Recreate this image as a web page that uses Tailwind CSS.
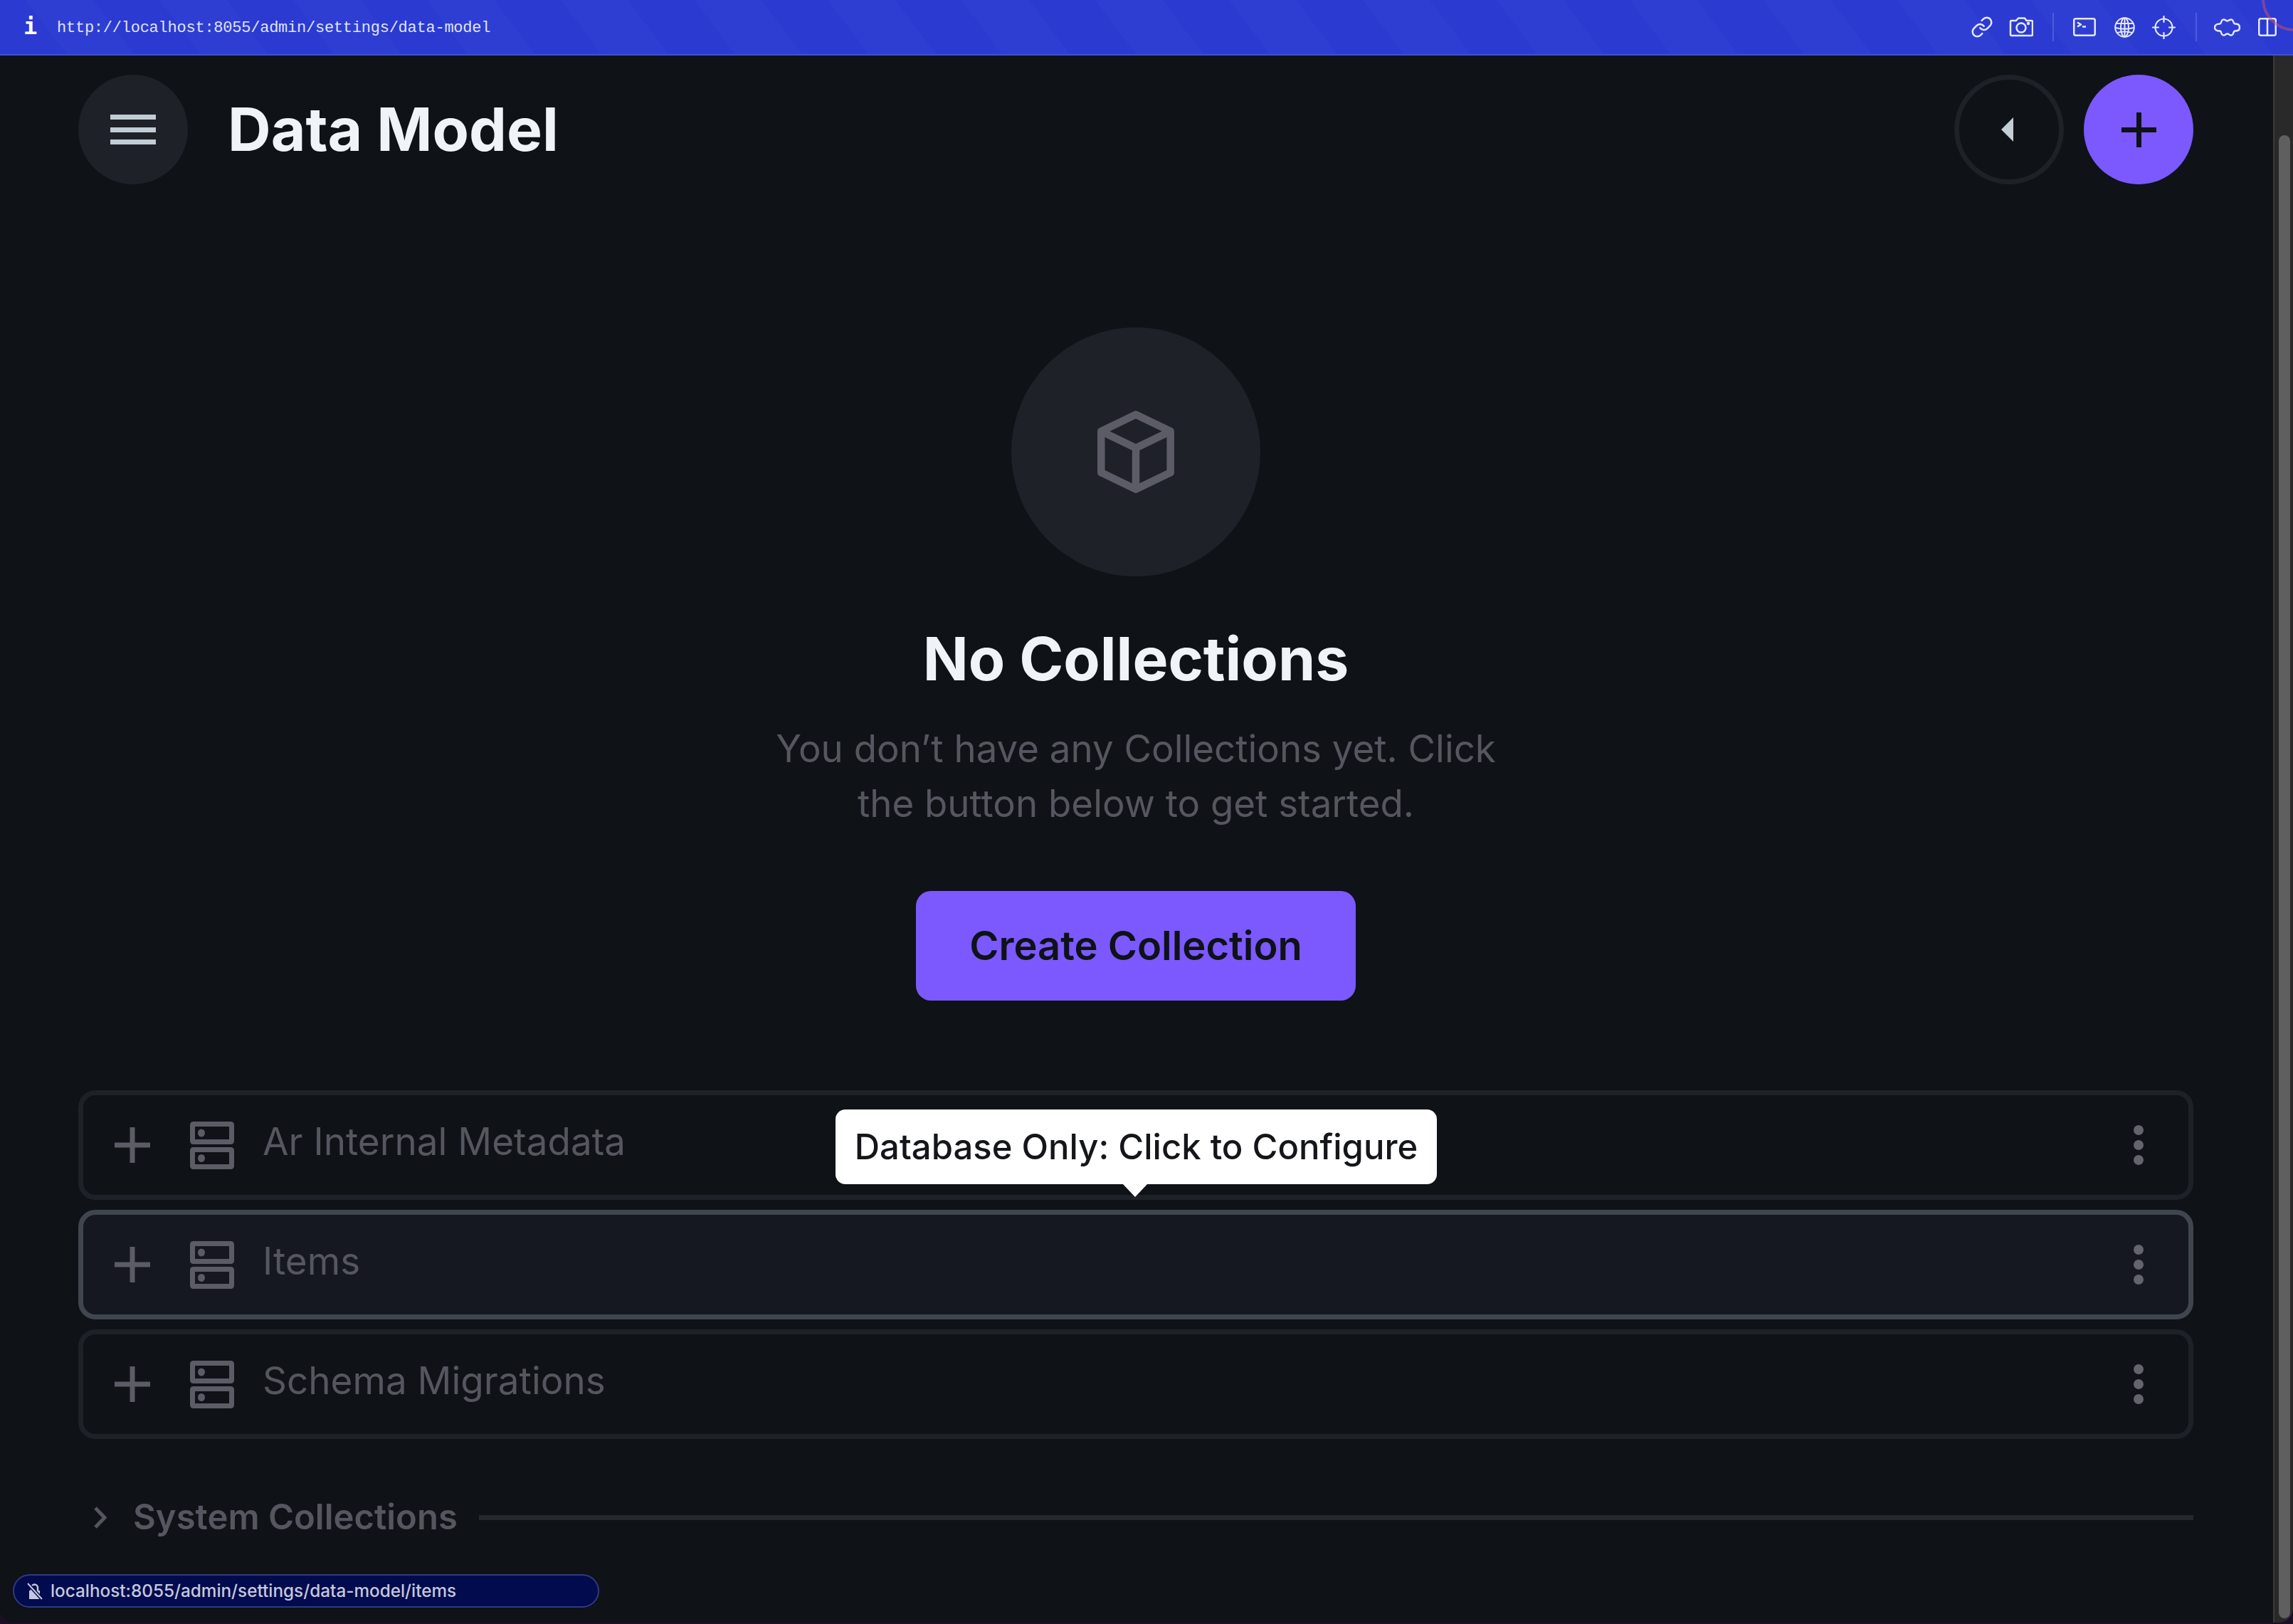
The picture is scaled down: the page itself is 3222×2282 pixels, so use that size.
<!DOCTYPE html>
<html lang="en">
<head>
    <meta charset="UTF-8">
    <meta name="viewport" content="width=device-width, initial-scale=1.0">
    <title>Data Model</title>
    <script src="https://cdn.jsdelivr.net/npm/@tailwindcss/browser@4"></script>
</head>
<body class="bg-[#1a0f24] font-['Inter',sans-serif]">
    <div class="relative w-[3222px] h-[2282px] overflow-hidden">
        <div class="flex flex-col h-[2280px] bg-[#0f1216] rounded-b-[20px] overflow-hidden">

            <!-- Browser toolbar -->
            <header class="h-[78px] shrink-0 flex items-center border-b-2 border-[#4152d8] text-[#e4e8ff] bg-[repeating-linear-gradient(53deg,#2b3ad0_0px,#2b3ad0_75px,#2f3ed2_75px,#2f3ed2_150px)]">
                <span class="w-[80px] pl-[33px] pb-[2px] text-[32px] leading-none font-bold font-['DejaVu_Sans_Mono',monospace] text-white">i</span>
                <span class="flex-1 pt-[2px] font-['Liberation_Mono',monospace] text-[22px] tracking-[-0.24px] text-[#dfe3ff]">http://localhost:8055/admin/settings/data-model</span>
                <div class="flex items-center">
                    <svg class="w-[32px] h-[32px]" viewBox="0 0 24 24" fill="none" stroke="currentColor" stroke-width="1.9" stroke-linecap="round" stroke-linejoin="round"><path d="M10 13a5 5 0 0 0 7.54.54l3-3a5 5 0 0 0-7.07-7.07l-1.72 1.71"/><path d="M14 11a5 5 0 0 0-7.54-.54l-3 3a5 5 0 0 0 7.07 7.07l1.71-1.71"/></svg>
                    <svg class="w-[34px] h-[28px] ml-[22px]" viewBox="0 0 34 28" fill="none" stroke="currentColor" stroke-width="2.5" stroke-linejoin="round"><path d="M3 5h7l3-3.5h9l2.500 3.500h7a1.500 1.500 0 0 1 1.500 1.500v18a1.500 1.500 0 0 1-1.500 1.500h-28a1.500 1.500 0 0 1-1.500-1.500v-18a1.500 1.500 0 0 1 1.500-1.500z"/><circle cx="17" cy="15" r="6.500"/><circle cx="27" cy="9" r="1" fill="currentColor"/></svg>
                    <span class="w-[2px] h-[40px] ml-[27px] bg-[#4c5cdc]"></span>
                    <svg class="w-[32px] h-[26px] ml-[27px]" viewBox="0 0 32 26" fill="none" stroke="currentColor" stroke-width="2.500" stroke-linejoin="round"><rect x="1.250" y="1.250" width="29.500" height="23.500" rx="2.500"/><path d="M6 6.500l5 3-5 3M13 12.500h5"/></svg>
                    <svg class="w-[29px] h-[29px] ml-[26px]" viewBox="0 0 29 29" fill="none" stroke="currentColor" stroke-width="2"><circle cx="14.500" cy="14.500" r="13.300"/><ellipse cx="14.500" cy="14.500" rx="5.500" ry="13.300"/><path d="M2.500 9h24M1.500 15c8 2 18 2 26 0M4 22c6-2 15-2 21 0M14.500 1v27"/></svg>
                    <svg class="w-[33px] h-[33px] ml-[24px]" viewBox="0 0 33 33" fill="none" stroke="currentColor" stroke-width="2.200" stroke-linecap="round"><circle cx="16.500" cy="16.500" r="12"/><path d="M16.500 1v8M16.500 24v8M1 16.500h8M24 16.500h8"/></svg>
                    <span class="w-[2px] h-[40px] ml-[28px] bg-[#4c5cdc]"></span>
                    <svg class="w-[37px] h-[25px] ml-[24px] mr-[1px]" viewBox="0 0 37 25" fill="none" stroke="currentColor" stroke-width="2.400" stroke-linejoin="round"><path d="M8 7.500C9.500 7.500 10 6 10.500 4C11 1.500 14 .8 16 2.300C17.500 3.500 20 3.500 21.500 2.300C24 .8 26.500 1.500 27 4C27.500 6 28 7.500 30 7.500C34 7.500 36 9.500 36 12.500C36 15.500 34 17.500 30 17.500C28 17.500 27.500 19 27 21C26.500 23.500 24 24.200 21.500 22.700C20 21.500 17.500 21.500 16 22.700C14 24.200 11 23.500 10.500 21C10 19 9.500 17.500 8 17.500C3.500 17.500 1 15.500 1 12.500C1 9.500 3.500 7.500 8 7.500Z"/></svg>
                    <svg class="w-[26px] h-[26px] ml-[24px] mr-[23px]" viewBox="0 0 26 26" fill="none" stroke="currentColor" stroke-width="2.500"><rect x="1.250" y="1.250" width="23.500" height="23.500" rx="2.500"/><path d="M13 1v24"/></svg>
                </div>
            </header>

            <div class="flex-1 flex min-h-0">
                <main class="flex-1 pl-[110px] pr-[112px] pt-[27px]">
                    <div class="flex items-center h-[154px]">
                        <button class="w-[154px] h-[154px] rounded-full bg-[#1e2128] flex items-center justify-center">
                            <span class="flex flex-col gap-[10.500px]">
                                <span class="block w-[64px] h-[7px] bg-[#c2ccd4]"></span>
                                <span class="block w-[64px] h-[7px] bg-[#c2ccd4]"></span>
                                <span class="block w-[64px] h-[7px] bg-[#c2ccd4]"></span>
                            </span>
                        </button>
                        <h1 class="flex-1 ml-[56px] text-[84px] leading-none font-bold text-[#f0f4f9]">Data Model</h1>
                        <button class="w-[154px] h-[154px] rounded-full border-[7px] border-[#1e2128] flex items-center justify-center">
                            <svg class="w-[17px] h-[34px] mr-[5px]" viewBox="0 0 17 34"><path d="M17 0V34L0 17z" fill="#c4ced6"/></svg>
                        </button>
                        <button class="w-[154px] h-[154px] ml-[28px] rounded-full bg-[#7b59ff] flex items-center justify-center">
                            <svg class="w-[49px] h-[49px]" viewBox="0 0 49 49"><path d="M21 0h7v21h21v7H28v21h-7V28H0v-7h21z" fill="#0f1216"/></svg>
                        </button>
                    </div>

                    <!-- Empty state -->
                    <section class="flex flex-col items-center pt-[201px]">
                        <div class="w-[350px] h-[350px] rounded-full bg-[#1e2128] flex items-center justify-center">
                            <svg class="w-[108px] h-[116px]" viewBox="0 0 108 116" fill="none" stroke="#5b5c66" stroke-width="10.500" stroke-linejoin="round"><path d="M54 5.500L102.700 29v58L54 110.500 5.300 87V29z"/><path d="M5.300 29L54 52.500 102.700 29M54 52.500v58"/></svg>
                        </div>
                        <h2 class="mt-[66px] text-[84px] leading-[100px] font-bold text-[#f0f4f9]">No Collections</h2>
                        <p class="mt-[38px] w-[1120px] text-center text-[52.800px] leading-[77px] text-[#55565f]">You don’t have any Collections yet. Click<br>the button below to get started.</p>
                        <button class="mt-[84px] w-[618px] h-[154px] rounded-[21px] bg-[#7b59ff] text-[56px] font-semibold text-[#0f1216]">Create Collection</button>
                    </section>

                    <!-- Collections -->
                    <section class="mt-[126px] flex flex-col gap-[14px]">
                        <div class="h-[154px] rounded-[24px] border-[7px] border-[#1e2128] flex items-center pl-[44px] pr-[63px]">
                            <svg class="w-[50px] h-[50px] shrink-0" viewBox="0 0 50 50"><path d="M21.500 0h7v21.500H50v7H28.500V50h-7V28.500H0v-7h21.500z" fill="#5b5c66"/></svg>
                            <svg class="w-[62px] h-[67px] ml-[56px] shrink-0" viewBox="0 0 62 67" fill="none" stroke="#5b5c66" stroke-width="7"><rect x="3.500" y="3.500" width="55" height="25" rx="1"/><rect x="3.500" y="39.500" width="55" height="24" rx="1"/><ellipse cx="16" cy="16" rx="5" ry="5.500" fill="#5b5c66" stroke="none"/><ellipse cx="16" cy="51.500" rx="5" ry="5.500" fill="#5b5c66" stroke="none"/></svg>
                            <span class="flex-1 ml-[40px] pb-[8px] text-[53px] text-[#55565f]">Ar Internal Metadata</span>
                            <svg class="w-[14px] h-[56px] shrink-0" viewBox="0 0 14 56" fill="#64646e"><circle cx="7" cy="7" r="7"/><circle cx="7" cy="28" r="7"/><circle cx="7" cy="49" r="7"/></svg>
                        </div>
                        <div class="h-[154px] rounded-[24px] border-[7px] border-[#3f4650] bg-[#151820] flex items-center pl-[44px] pr-[63px]">
                            <svg class="w-[50px] h-[50px] shrink-0" viewBox="0 0 50 50"><path d="M21.500 0h7v21.500H50v7H28.500V50h-7V28.500H0v-7h21.500z" fill="#5b5c66"/></svg>
                            <svg class="w-[62px] h-[67px] ml-[56px] shrink-0" viewBox="0 0 62 67" fill="none" stroke="#5b5c66" stroke-width="7"><rect x="3.500" y="3.500" width="55" height="25" rx="1"/><rect x="3.500" y="39.500" width="55" height="24" rx="1"/><ellipse cx="16" cy="16" rx="5" ry="5.500" fill="#5b5c66" stroke="none"/><ellipse cx="16" cy="51.500" rx="5" ry="5.500" fill="#5b5c66" stroke="none"/></svg>
                            <span class="flex-1 ml-[40px] pb-[8px] text-[53px] text-[#55565f]">Items</span>
                            <svg class="w-[14px] h-[56px] shrink-0" viewBox="0 0 14 56" fill="#64646e"><circle cx="7" cy="7" r="7"/><circle cx="7" cy="28" r="7"/><circle cx="7" cy="49" r="7"/></svg>
                        </div>
                        <div class="h-[154px] rounded-[24px] border-[7px] border-[#1e2128] flex items-center pl-[44px] pr-[63px]">
                            <svg class="w-[50px] h-[50px] shrink-0" viewBox="0 0 50 50"><path d="M21.500 0h7v21.500H50v7H28.500V50h-7V28.500H0v-7h21.500z" fill="#5b5c66"/></svg>
                            <svg class="w-[62px] h-[67px] ml-[56px] shrink-0" viewBox="0 0 62 67" fill="none" stroke="#5b5c66" stroke-width="7"><rect x="3.500" y="3.500" width="55" height="25" rx="1"/><rect x="3.500" y="39.500" width="55" height="24" rx="1"/><ellipse cx="16" cy="16" rx="5" ry="5.500" fill="#5b5c66" stroke="none"/><ellipse cx="16" cy="51.500" rx="5" ry="5.500" fill="#5b5c66" stroke="none"/></svg>
                            <span class="flex-1 ml-[40px] pb-[8px] text-[53px] text-[#55565f]">Schema Migrations</span>
                            <svg class="w-[14px] h-[56px] shrink-0" viewBox="0 0 14 56" fill="#64646e"><circle cx="7" cy="7" r="7"/><circle cx="7" cy="28" r="7"/><circle cx="7" cy="49" r="7"/></svg>
                        </div>
                    </section>

                    <div class="mt-[80px] h-[60px] flex items-center">
                        <svg class="w-[19px] h-[31px] ml-[21px] shrink-0" viewBox="0 0 19 31" fill="none" stroke="#55565f" stroke-width="5"><path d="M3 2l13 13.500L3 29"/></svg>
                        <span class="ml-[37px] text-[49px] font-semibold text-[#55565f]">System Collections</span>
                        <span class="flex-1 ml-[30px] h-[7px] bg-[#25282d]"></span>
                    </div>
                </main>

                <!-- Scrollbar -->
                <aside class="w-[28px] shrink-0 bg-[#292929] border-l-2 border-[#3a3a3a] pt-[112px] pb-[6px] pl-[6px] pr-[4px]">
                    <div class="h-full rounded-full bg-[#5f5f5f]"></div>
                </aside>
            </div>
        </div>

        <!-- Tooltip -->
        <div class="absolute left-[1174px] top-[1559px] w-[845px] h-[105px] rounded-[14px] bg-white flex items-center justify-center text-[49px] font-medium text-[#14161a]">
            Database Only: Click to Configure
            <svg class="absolute left-[404px] top-[105px] w-[34px] h-[18px]" viewBox="0 0 34 18"><path d="M0 0h34L17 18z" fill="#fff"/></svg>
        </div>

        <!-- Link status -->
        <div class="absolute left-[18px] top-[2212px] w-[824px] h-[47px] rounded-full bg-[#020b4d] border-2 border-[#2f3a80] flex items-center pl-[18px] text-[24.300px] font-medium text-[#c5c8dc]">
            <svg class="w-[22px] h-[24px] shrink-0" viewBox="0 0 22 24" fill="none"><path d="M3 11h15v12H3z" fill="#c5c8dc"/><path d="M6 11V7a4.500 4.500 0 0 1 9 0v4" stroke="#c5c8dc" stroke-width="2.500"/><path d="M1 1l20 22" stroke="#020b4d" stroke-width="5"/><path d="M1 1l20 22" stroke="#c5c8dc" stroke-width="2"/></svg>
            <span class="ml-[11px]">localhost:8055/admin/settings/data-model/items</span>
        </div>

        <!-- Corner arc over the toolbar -->
        <svg class="absolute right-0 top-0 w-[60px] h-[60px]" viewBox="0 0 60 60" fill="none"><circle cx="62" cy="-2" r="44" stroke="#d2506e" stroke-opacity="0.5" stroke-width="4"/></svg>
    </div>
</body>
</html>
